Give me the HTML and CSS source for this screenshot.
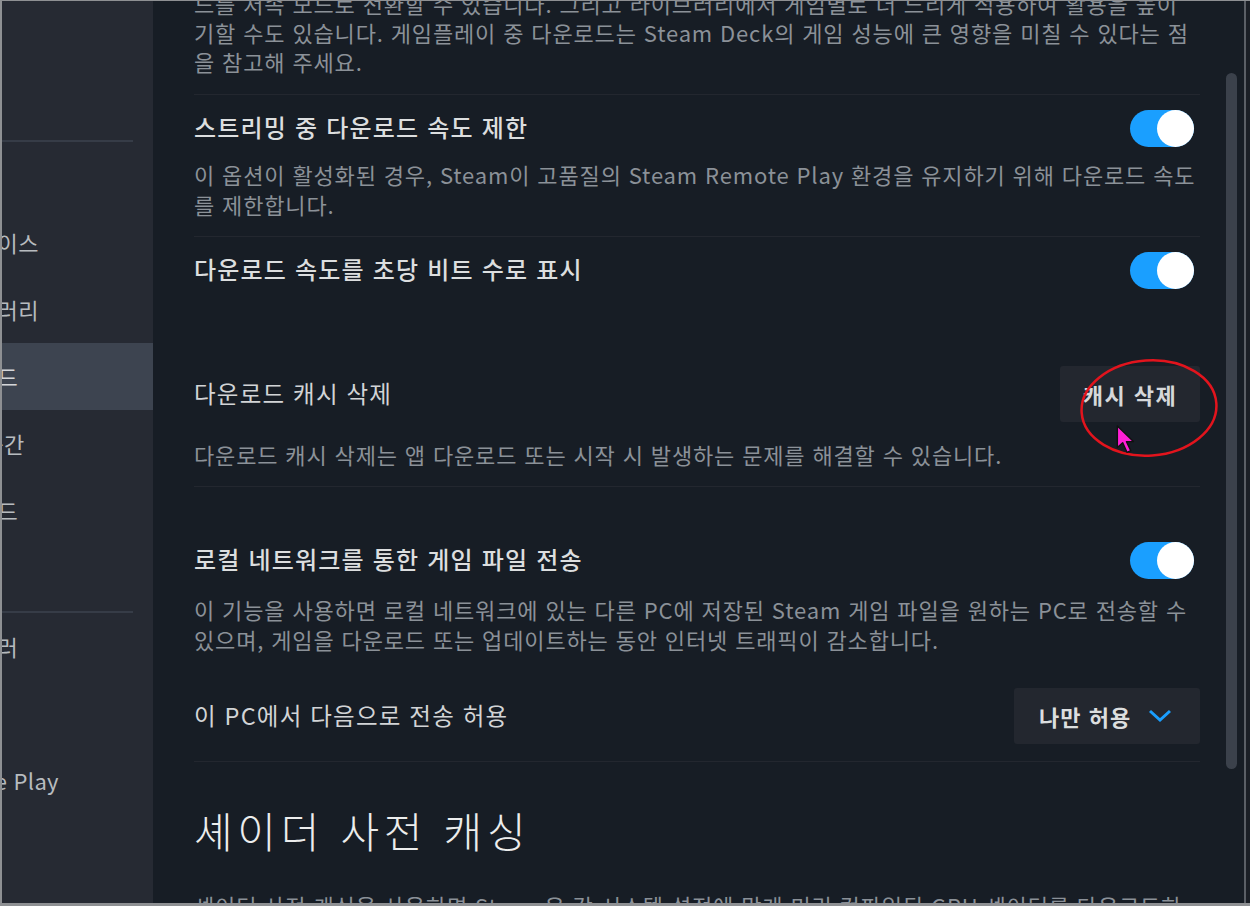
FILE: index.html
```html
<!DOCTYPE html>
<html lang="ko">
<head>
    <meta charset="UTF-8">
    <meta name="viewport" content="width=device-width, initial-scale=1.0">
    <title>Steam 설정 - 다운로드</title>
    <link rel="stylesheet" href="styles.css">
</head>
<body>
    <div class="window">
        <!-- Settings navigation (window is partly off-screen on the left) -->
        <aside class="sidebar">
            <div class="nav-divider"></div>
            <div class="nav-item">알림</div>
            <div class="nav-item">인터페이스</div>
            <div class="nav-item">라이브러리</div>
            <div class="nav-item active">다운로드</div>
            <div class="nav-item">저장 공간</div>
            <div class="nav-item">클라우드</div>
            <div class="nav-item">게임 내</div>
            <div class="nav-divider"></div>
            <div class="nav-item">컨트롤러</div>
            <div class="nav-item">음성</div>
            <div class="nav-item latin">Remote Play</div>
        </aside>

        <main class="main">
            <div class="content">
                <p class="desc intro">드를 저속 모드로 전환할 수 있습니다. 그리고 라이브러리에서 게임별로 더 느리게 적용하여 활용을 높이<br>기할 수도 있습니다. 게임플레이 중 다운로드는 Steam Deck의 게임 성능에 큰 영향을 미칠 수 있다는 점<br>을 참고해 주세요.</p>

                <section class="setting">
                    <div class="setting-row">
                        <span class="title">스트리밍 중 다운로드 속도 제한</span>
                        <span class="toggle"></span>
                    </div>
                    <p class="desc">이 옵션이 활성화된 경우, Steam이 고품질의 Steam Remote Play 환경을 유지하기 위해 다운로드 속도<br>를 제한합니다.</p>
                </section>

                <section class="setting plain">
                    <div class="setting-row">
                        <span class="title">다운로드 속도를 초당 비트 수로 표시</span>
                        <span class="toggle"></span>
                    </div>
                </section>

                <section class="setting cache">
                    <div class="setting-row tall">
                        <span class="label">다운로드 캐시 삭제</span>
                        <button class="btn" type="button">캐시 삭제
                            <svg class="circle-mark" width="140" height="100" viewBox="0 0 140 100">
                                <ellipse cx="70" cy="50" rx="67.5" ry="47.5" fill="none" stroke="#e2141d" stroke-width="2.5" transform="rotate(-4 70 50)"/>
                            </svg>
                            <svg class="cursor" width="22" height="30" viewBox="0 0 20 28">
                                <path d="M1 1 L1 21 L6 16.5 L10 25.5 L13.5 24 L9.5 15.5 L16 15.5 Z" fill="#ff1fd6" stroke="#111" stroke-width="1.3" stroke-linejoin="round"/>
                            </svg>
                        </button>
                    </div>
                    <p class="desc">다운로드 캐시 삭제는 앱 다운로드 또는 시작 시 발생하는 문제를 해결할 수 있습니다.</p>
                </section>

                <section class="setting network">
                    <div class="setting-row">
                        <span class="title">로컬 네트워크를 통한 게임 파일 전송</span>
                        <span class="toggle"></span>
                    </div>
                    <p class="desc">이 기능을 사용하면 로컬 네트워크에 있는 다른 PC에 저장된 Steam 게임 파일을 원하는 PC로 전송할 수<br>있으며, 게임을 다운로드 또는 업데이트하는 동안 인터넷 트래픽이 감소합니다.</p>
                    <div class="setting-row tall sub">
                        <span class="label">이 PC에서 다음으로 전송 허용</span>
                        <div class="dropdown">
                            <span>나만 허용</span>
                            <svg width="24" height="14" viewBox="0 0 24 14">
                                <path d="M2 2 L12 11 L22 2" fill="none" stroke="#1a9fff" stroke-width="3"/>
                            </svg>
                        </div>
                    </div>
                </section>

                <h2 class="section-heading">셰이더 사전 캐싱</h2>
                <p class="desc">셰이더 사전 캐싱을 사용하면 Steam은 각 시스템 설정에 맞게 미리 컴파일된 GPU 셰이더를 다운로드하</p>
            </div>
        </main>

        <div class="scrollbar"><div class="thumb"></div></div>
        <div class="edge"></div>
    </div>
</body>
</html>
```

FILE: styles.css
```css
/* Reset */
* {
    margin: 0;
    padding: 0;
    box-sizing: border-box;
}

body {
    background: #171d25;
    font-family: "Noto Sans CJK KR", "Noto Sans", sans-serif;
    overflow: hidden;
}

.window {
    width: 1250px;
    height: 906px;
    display: flex;
    border-top: 1px solid #8e9093;
    border-left: 2px solid #8e9093;
    border-bottom: 3px solid #8e9093;
    overflow: hidden;
}

/* Sidebar */
.sidebar {
    width: 151px;
    flex-shrink: 0;
    background: #262a33;
    padding-top: 139px;
    overflow: hidden;
}

.nav-divider {
    height: 2px;
    margin-right: 20px;
    background: #363c47;
}

.nav-item {
    height: 67px;
    line-height: 67px;
    font-size: 22px;
    letter-spacing: 0.3px;
    color: #b7bbbf;
    white-space: nowrap;
    text-indent: -66px;
    overflow: hidden;
}

.nav-item.latin {
    text-indent: -76px;
}

.nav-item.active {
    background: #3d4450;
    color: #d4d6d9;
}

/* Main settings panel */
.main {
    flex: 1;
    background: #171d25;
    padding: 0 26px 0 41px;
    overflow: hidden;
}

.content {
    margin-top: -12px;
}

.desc {
    font-size: 22px;
    line-height: 30px;
    letter-spacing: 0.85px;
    color: #8b9198;
    white-space: nowrap;
}

.intro {
    line-height: 29px;
    padding-bottom: 18px;
    border-bottom: 1px solid #23272f;
}

.setting {
    padding: 15px 0 17px;
    border-bottom: 1px solid #23272f;
}

.setting .desc {
    margin-top: 12px;
}

.setting.plain {
    border-bottom: none;
    padding-bottom: 38px;
}

.setting.cache {
    padding-top: 39px;
}

.setting.cache .desc {
    margin-top: 17px;
}

.setting.network {
    padding-top: 55px;
}

.setting.network .desc {
    margin-top: 15px;
}

.setting-row {
    display: flex;
    align-items: center;
    justify-content: space-between;
    height: 37px;
}

.setting-row.tall {
    height: 56px;
}

.setting-row.sub {
    margin-top: 34px;
}

.title {
    font-size: 24px;
    line-height: 30px;
    font-weight: 500;
    letter-spacing: 1.2px;
    color: #dcdedf;
    margin-top: -3px;
}

.label {
    font-size: 23.5px;
    line-height: 30px;
    letter-spacing: 1.2px;
    color: #d2d4d6;
    margin-top: -3px;
}

/* Toggle switch (on) */
.toggle {
    position: relative;
    width: 64px;
    height: 37px;
    margin-right: 6px;
    border-radius: 19px;
    background: #1a9fff;
}

.toggle::after {
    content: "";
    position: absolute;
    right: 0;
    top: 0;
    width: 37px;
    height: 37px;
    border-radius: 50%;
    background: #ffffff;
}

.btn {
    position: relative;
    width: 140px;
    height: 56px;
    border: none;
    border-radius: 3px;
    background: #23272f;
    color: #d6d8da;
    font-family: inherit;
    font-size: 22px;
    font-weight: 700;
    letter-spacing: 1.5px;
}

/* Annotation drawn over the button */
.circle-mark {
    position: absolute;
    left: 19px;
    top: -8px;
    pointer-events: none;
}

.cursor {
    position: absolute;
    left: 56px;
    top: 59px;
}

.dropdown {
    display: flex;
    align-items: center;
    gap: 17px;
    width: 186px;
    height: 56px;
    padding-left: 25px;
    border-radius: 3px;
    background: #23272f;
    color: #dcdedf;
    font-size: 22px;
    font-weight: 700;
    letter-spacing: 1px;
}

.section-heading {
    margin-top: 43px;
    font-size: 42px;
    line-height: 50px;
    font-weight: 300;
    letter-spacing: 4.7px;
    color: #eceded;
}

.section-heading + .desc {
    margin-top: 35px;
}

/* Scrollbar and window edge */
.scrollbar {
    width: 11px;
    margin-right: 7px;
    flex-shrink: 0;
    padding-top: 72px;
}

.thumb {
    height: 696px;
    border-radius: 6px;
    background: #3b414b;
}

.edge {
    width: 6px;
    flex-shrink: 0;
    border-left: 2px solid #5b5f66;
    background: #1b1f26;
}
```
